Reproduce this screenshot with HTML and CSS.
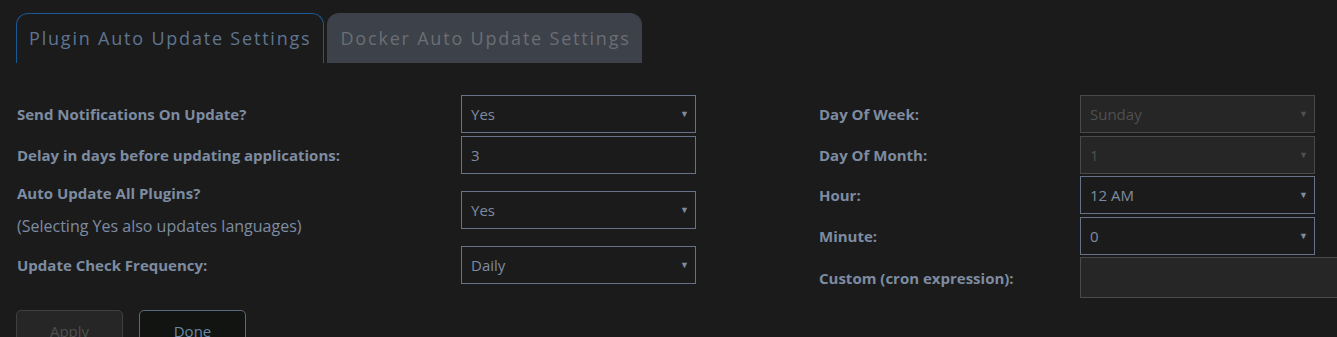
FILE: index.html
```html
<!DOCTYPE html>
<html lang="en">
<head>
  <meta charset="UTF-8">
  <title>Auto Update Settings</title>
  <link rel="stylesheet" href="styles.css">
</head>
<body>

  <!-- Tabs -->
  <div class="tabs">
    <div class="tab tab-active">Plugin Auto Update Settings</div>
    <div class="tab">Docker Auto Update Settings</div>
  </div>

  <div class="content">
    <div class="columns">

      <!-- Left column -->
      <div class="column column-left">
        <div class="row">
          <div class="label">Send Notifications On Update?</div>
          <div class="field select">Yes<span class="arrow">&#9660;</span></div>
        </div>
        <div class="row">
          <div class="label">Delay in days before updating applications:</div>
          <div class="field">3</div>
        </div>
        <div class="row row-tall">
          <div class="label">
            <div class="label-line">Auto Update All Plugins?</div>
            <div class="label-line label-note">(Selecting Yes also updates languages)</div>
          </div>
          <div class="field select">Yes<span class="arrow">&#9660;</span></div>
        </div>
        <div class="row">
          <div class="label">Update Check Frequency:</div>
          <div class="field select">Daily<span class="arrow">&#9660;</span></div>
        </div>
      </div>

      <!-- Right column -->
      <div class="column column-right">
        <div class="row">
          <div class="label">Day Of Week:</div>
          <div class="field select disabled">Sunday<span class="arrow">&#9660;</span></div>
        </div>
        <div class="row">
          <div class="label">Day Of Month:</div>
          <div class="field select disabled">1<span class="arrow">&#9660;</span></div>
        </div>
        <div class="row">
          <div class="label">Hour:</div>
          <div class="field select">12 AM<span class="arrow">&#9660;</span></div>
        </div>
        <div class="row">
          <div class="label">Minute:</div>
          <div class="field select">0<span class="arrow">&#9660;</span></div>
        </div>
        <div class="row row-custom">
          <div class="label">Custom (cron expression):</div>
          <div class="field disabled"></div>
        </div>
      </div>

    </div>

    <!-- Buttons -->
    <div class="buttons">
      <button class="btn btn-disabled">Apply</button>
      <button class="btn btn-done">Done</button>
    </div>
  </div>

</body>
</html>
```

FILE: styles.css
```css
body {
  margin: 0;
  padding: 0;
  background-color: #1c1b1c;
  font-family: "Open Sans", "Liberation Sans", sans-serif;
  font-size: 15px;
  color: #7d8ca1;
  overflow: hidden;
}

.tabs {
  display: flex;
  gap: 3px;
  padding: 13px 0 0 16px;
}

.tab {
  height: 50px;
  box-sizing: border-box;
  padding: 12px 12px 0 12px;
  border-radius: 12px 12px 0 0;
  font-size: 18px;
  letter-spacing: 1.8px;
  color: #6b6e74;
  background-color: #3c414a;
  border: 1px solid #3c414a;
  border-bottom: none;
}

.tab + .tab {
  padding: 12px 10px 0 12px;
}

.tab-active {
  background-color: #1c1b1c;
  border-color: #1a5a92;
  color: #5f7590;
}

.content {
  padding: 32px 0 0 17px;
}

.columns {
  display: flex;
}

.column {
  display: flex;
  flex-direction: column;
  gap: 3px;
  flex-shrink: 0;
}

.column-left {
  width: 802px;
}

.column-right {
  gap: 2.6px;
}

.row {
  display: flex;
  align-items: center;
  min-height: 38px;
}

.column-left .label {
  width: 444px;
}

.column-right .label {
  width: 261px;
}

.label {
  font-weight: bold;
}

.row-tall {
  height: 66px;
}

.label-line {
  line-height: 33px;
}

.label-note {
  font-weight: normal;
  font-size: 16px;
}

.field {
  width: 235px;
  height: 38px;
  box-sizing: border-box;
  border: 1px solid #657287;
  padding: 0 0 0 9px;
  line-height: 36px;
  position: relative;
  color: #7d8ca1;
}

.arrow {
  position: absolute;
  right: 6px;
  top: 0;
  font-size: 9px;
}

.disabled {
  background-color: #262626;
  border-color: #4a4a4a;
  color: #505050;
}

.row-custom .field {
  height: 41px;
  width: 300px;
}

.buttons {
  display: flex;
  gap: 16px;
  margin-top: 12px;
  margin-left: -1px;
}

.btn {
  width: 107px;
  height: 38px;
  border-radius: 5px;
  font-family: inherit;
  font-size: 15px;
  padding: 4px 0 0 0;
  text-align: center;
  vertical-align: top;
}

.btn-disabled {
  background-color: #262626;
  border: 1px solid #404040;
  color: #4f4f4f;
}

.btn-done {
  background-color: #121411;
  border: 1px solid #5a6a7e;
  color: #6b87a6;
}
```
